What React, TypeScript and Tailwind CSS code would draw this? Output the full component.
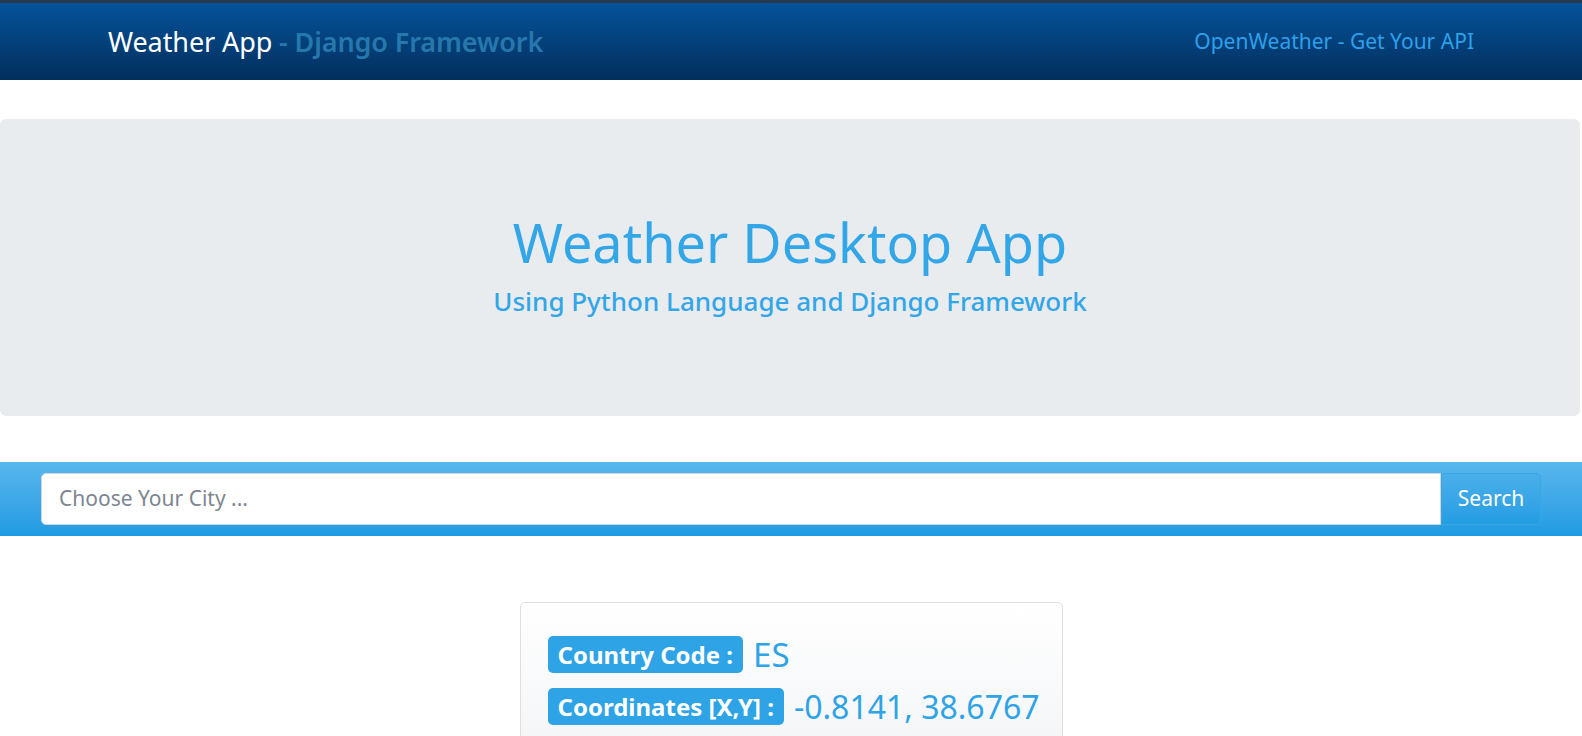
import React from "react";

export default function App() {
  const font = { fontFamily: '"Noto Sans", "Open Sans", sans-serif' };
  return (
    <div className="min-h-screen bg-white overflow-hidden" style={font}>
      <nav className="h-[80px] border-t-[3px] border-[#26384c] bg-gradient-to-b from-[#04539b] to-[#032f5d] flex items-center justify-between px-[108px]">
        <div className="text-[27px] leading-none tracking-[-0.1px]">
          <span className="text-white">Weather App</span>
          <span className="text-[#2678ac] font-semibold"> - Django Framework</span>
        </div>
        <a className="text-[21px] text-[#2ea0ea]">OpenWeather - Get Your API</a>
      </nav>

      <section className="mt-[39px] mr-[2px] h-[297px] bg-[#e9ecef] rounded-md flex flex-col items-center justify-center pb-[8px]">
        <h1 className="text-[54px] leading-[64px] text-[#33a6e8]">Weather Desktop App</h1>
        <h3 className="mt-[10px] text-[26px] leading-[34px] text-[#33a6e8] font-medium">Using Python Language and Django Framework</h3>
      </section>

      <div className="mt-[46px] h-[74px] bg-gradient-to-b from-[#57b6ed] to-[#1e9be3] flex items-center px-[41px]">
        <div className="flex w-full items-stretch h-[52px]">
          <div className="flex-1 bg-white border border-[#cfd6dd] rounded-l-[5px] flex items-center px-[17px]">
            <span className="text-[21px] text-[#7d8690]">Choose Your City ...</span>
          </div>
          <button className="w-[100px] rounded-r-[5px] border border-[#3aa6e6] bg-gradient-to-b from-[#4aafea] to-[#239de3] text-white text-[21px]">Search</button>
        </div>
      </div>

      <div className="mt-[66px] flex justify-center">
        <div className="w-[543px] h-[200px] border border-[#dcdfe3] rounded-[5px] bg-gradient-to-b from-white to-[#f0f2f5] pt-[33px] pl-[27px] pr-[10px]">
          <div className="flex flex-nowrap items-center gap-[10px] mb-[15px] whitespace-nowrap">
            <span className="shrink-0 bg-[#2ea3e6] text-white font-bold text-[24px] leading-[37px] px-[10px] rounded-[5px]">Country Code :</span>
            <span className="shrink-0 text-[#2ea3e6] text-[33px] leading-none">ES</span>
          </div>
          <div className="flex flex-nowrap items-center gap-[10px] whitespace-nowrap">
            <span className="shrink-0 bg-[#2ea3e6] text-white font-bold text-[24px] leading-[37px] px-[10px] rounded-[5px]">Coordinates [X,Y] :</span>
            <span className="shrink-0 text-[#2ea3e6] text-[32px] leading-none">-0.8141, 38.6767</span>
          </div>
        </div>
      </div>
    </div>
  );
}
